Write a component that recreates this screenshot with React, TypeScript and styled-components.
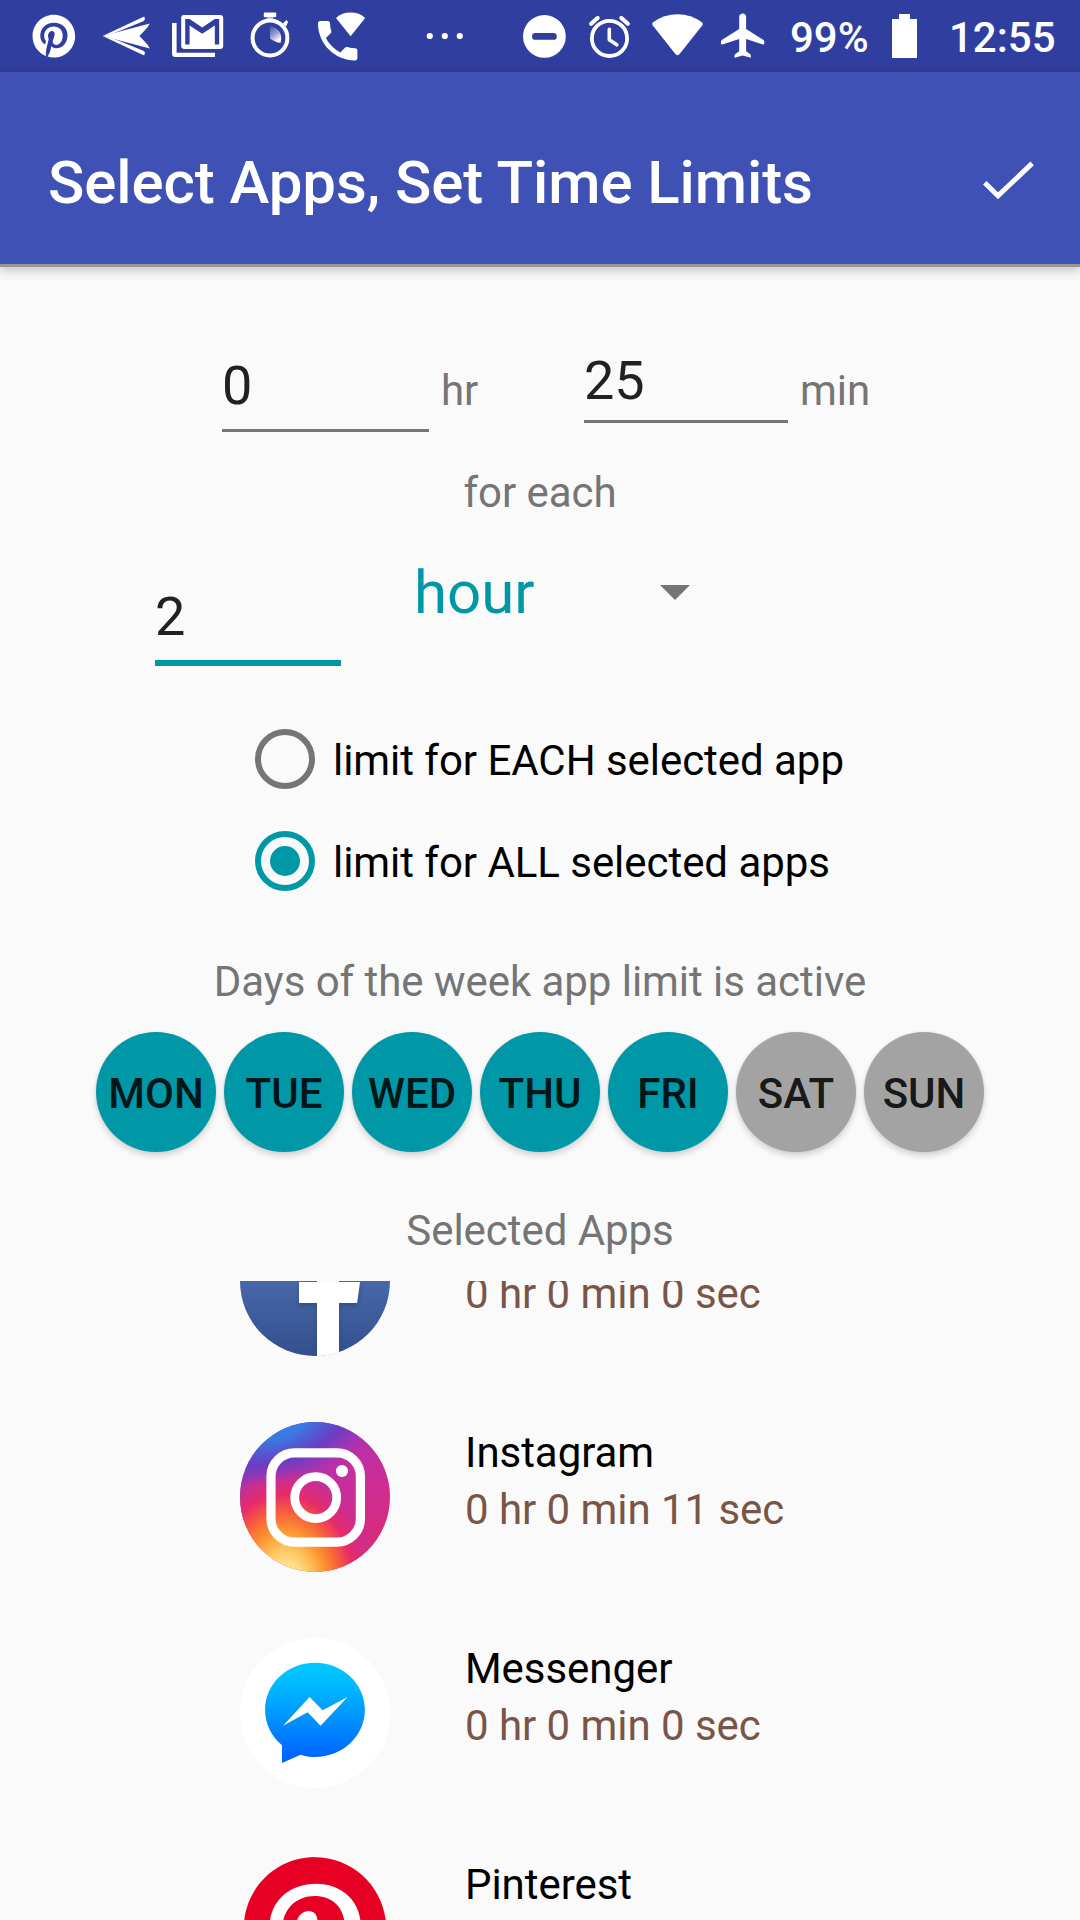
import React, { useState } from "react";
import styled, { createGlobalStyle, css } from "styled-components";

const color = {
  statusBar: "#303f9f",
  appBar: "#3f51b5",
  page: "#fafafa",
  accent: "#0097a7",
  hint: "#757575",
  input: "#212121",
  usage: "#795548",
};

const GlobalStyle = createGlobalStyle`
  * { box-sizing: border-box; }
  html, body { margin: 0; padding: 0; background: ${color.page}; }
  body { font-family: Roboto, "Noto Sans", sans-serif; overflow: hidden; }
`;

const Screen = styled.div`
  width: 1080px;
  height: 1920px;
  display: flex;
  flex-direction: column;
  overflow: hidden;
  background: ${color.page};
`;

/* ---------- status bar ---------- */

const StatusBar = styled.div`
  flex: none;
  display: flex;
  align-items: flex-start;
  height: 72px;
  background: ${color.statusBar};
  color: #fff;
`;

const StatusIcon = styled.svg<{ $gap: number }>`
  flex: none;
  display: block;
  height: 72px;
  margin-left: ${(p) => p.$gap}px;
  fill: #fff;
`;

const StatusText = styled.span<{ $gap: number; $width: number }>`
  flex: none;
  width: ${(p) => p.$width}px;
  margin-left: ${(p) => p.$gap}px;
  padding-top: 13px;
  font-size: 42px;
  font-weight: 500;
  line-height: 50px;
  white-space: nowrap;
`;

/* ---------- app bar ---------- */

const AppBar = styled.header`
  flex: none;
  position: relative;
  display: flex;
  align-items: flex-start;
  justify-content: space-between;
  height: 192px;
  padding: 76px 42px 0 48px;
  background: ${color.appBar};
  color: #fff;
  box-shadow: 0 3px 0 #969696, 0 4px 12px 1px rgba(0, 0, 0, 0.28);
`;

const Title = styled.h1`
  margin: 0;
  font-size: 60px;
  font-weight: 500;
  letter-spacing: -0.085px;
  line-height: 70px;
  white-space: nowrap;
`;

const DoneButton = styled.button`
  width: 60px;
  height: 60px;
  margin-top: 6px;
  padding: 0;
  border: 0;
  background: none;
  svg { display: block; }
`;

/* ---------- limit form ---------- */

const Form = styled.main`
  flex: 1;
  min-height: 0;
  display: flex;
  flex-direction: column;
  letter-spacing: -0.045px;
`;

const AllowanceRow = styled.div`
  display: flex;
  align-items: flex-start;
  height: 204px;
  padding: 84px 0 0 222px;
`;

const PeriodRow = styled.div`
  display: flex;
  align-items: flex-start;
  height: 190px;
  padding: 40px 0 0 155px;
`;

const NumberField = styled.div<{ $width: number; $height: number; $top?: number; $focused?: boolean }>`
  flex: none;
  width: ${(p) => p.$width}px;
  height: ${(p) => p.$height}px;
  margin-top: ${(p) => p.$top ?? 0}px;
  border-bottom: ${(p) => (p.$focused ? `6px solid ${color.accent}` : `3px solid ${color.hint}`)};
  color: ${color.input};
  font-size: 54px;
  line-height: 64px;
`;

const Unit = styled.span<{ $width: number }>`
  flex: none;
  width: ${(p) => p.$width}px;
  padding: 18px 0 0 12px;
  color: ${color.hint};
  font-size: 42px;
  line-height: 50px;
`;

const Caption = styled.p<{ $bottom: number }>`
  flex: none;
  margin: 0 0 ${(p) => p.$bottom}px;
  color: ${color.hint};
  font-size: 42px;
  line-height: 50px;
  text-align: center;
`;

const Spinner = styled.div`
  display: flex;
  align-items: flex-start;
  justify-content: space-between;
  width: 276px;
  margin-left: 73px;
  color: ${color.accent};
  font-size: 60px;
  line-height: 70px;
`;

const Caret = styled.span`
  width: 0;
  height: 0;
  margin-top: 27px;
  border: 15px solid transparent;
  border-top-color: ${color.hint};
  border-bottom: 0;
`;

const RadioGroup = styled.div`
  display: flex;
  flex-direction: column;
  margin-bottom: 45px;
  padding-left: 255px;
`;

const RadioRow = styled.label`
  display: flex;
  align-items: center;
  gap: 18px;
  height: 102px;
  color: #000;
  font-size: 42px;
  line-height: 50px;
  white-space: nowrap;
`;

const RadioLabel = styled.span`
  padding-top: 4px;
`;

const RadioRing = styled.span<{ $checked: boolean }>`
  display: flex;
  align-items: center;
  justify-content: center;
  width: 60px;
  height: 60px;
  border: 6px solid ${(p) => (p.$checked ? color.accent : color.hint)};
  border-radius: 50%;
  ${(p) =>
    p.$checked &&
    css`
      &::after {
        content: "";
        width: 30px;
        height: 30px;
        border-radius: 50%;
        background: ${color.accent};
      }
    `}
`;

const DayRow = styled.div`
  display: flex;
  justify-content: center;
  gap: 8px;
  margin-bottom: 54px;
`;

const DayButton = styled.button<{ $active: boolean }>`
  width: 120px;
  height: 120px;
  padding: 3px 0 0;
  border: 0;
  border-radius: 50%;
  background: ${(p) => (p.$active ? color.accent : "#a3a3a3")};
  color: rgba(0, 0, 0, 0.87);
  font: 500 42px/50px Roboto, sans-serif;
  box-shadow: 0 4px 6px rgba(0, 0, 0, 0.15), 0 0 3px rgba(0, 0, 0, 0.08);
`;

/* ---------- app list ---------- */

const AppList = styled.ul`
  flex: 1;
  min-height: 0;
  overflow: hidden;
  margin: 0;
  padding: 0 0 0 240px;
  list-style: none;
`;

const AppRow = styled.li`
  display: flex;
  align-items: flex-start;
  gap: 75px;
  height: 216px;
  &:first-child { margin-top: -75px; }
`;

const AppIcon = styled.svg`
  flex: none;
  display: block;
  width: 150px;
  height: 150px;
`;

const AppText = styled.div`
  display: flex;
  flex-direction: column;
  gap: 7px;
  padding-top: 6px;
  font-size: 42px;
  line-height: 50px;
  white-space: nowrap;
`;

const AppName = styled.span`
  min-height: 50px;
  color: #000;
`;

const AppUsage = styled.span`
  color: ${color.usage};
`;

const PINTEREST =
  "M12.017 0C5.396 0 .029 5.367.029 11.987c0 5.079 3.158 9.417 7.618 11.162-.105-.949-.199-2.403.041-3.439.219-.937 1.406-5.957 1.406-5.957s-.359-.72-.359-1.781c0-1.663.967-2.911 2.168-2.911 1.024 0 1.518.769 1.518 1.688 0 1.029-.653 2.567-.992 3.992-.285 1.193.6 2.165 1.775 2.165 2.128 0 3.768-2.245 3.768-5.487 0-2.861-2.063-4.869-5.008-4.869-3.41 0-5.409 2.562-5.409 5.199 0 1.033.394 2.143.889 2.741.099.12.112.225.085.345-.09.375-.293 1.199-.334 1.363-.053.225-.172.271-.401.165-1.495-.69-2.433-2.878-2.433-4.646 0-3.776 2.748-7.252 7.92-7.252 4.158 0 7.392 2.967 7.392 6.923 0 4.135-2.607 7.462-6.233 7.462-1.214 0-2.354-.629-2.758-1.379l-.749 2.848c-.269 1.045-1.004 2.352-1.498 3.146 1.123.345 2.306.535 3.55.535 6.607 0 11.985-5.365 11.985-11.987C23.97 5.39 18.592.026 11.985.026L12.017 0z";

/* Status glyphs are drawn in screen coordinates: each viewBox is a slice of the 72px bar. */
const Glyph = ({ x, w, gap, children }: { x: number; w: number; gap: number; children: React.ReactNode }) => (
  <StatusIcon $gap={gap} width={w} viewBox={`${x} 0 ${w} 72`} aria-hidden>
    {children}
  </StatusIcon>
);

const StatusIcons = () => (
  <StatusBar>
    <Glyph x={30} w={50} gap={30}>
      <path d={PINTEREST} transform="translate(32.5 14.8) scale(1.78)" />
    </Glyph>
    <Glyph x={100} w={52} gap={20}>
      <path d="M102.6 36L144.2 16.4L145 19.6L142.8 21.6L113 33.6Z" />
      <path d="M102.6 36L149.8 23.6L147.4 27.4L139.4 36L147.4 44.6L149.8 48.6Z" />
      <path d="M102.6 36L113 38.6L142.8 50.4L145 52.2L144.2 55.6Z" />
    </Glyph>
    <Glyph x={170} w={56} gap={18}>
      <path d="M172 23H176.6V52.8H215V57H175.5Q172 57 172 53.5Z" />
      <path
        fillRule="evenodd"
        d="M184 15H220Q223.2 15 223.2 18V46Q223.2 49 220 49H184.5Q181.2 49 181.2 46V18Q181.2 15 184 15ZM185.2 19V44.4H189.6V25.6L202.2 33.8L214.8 25.6V44.4H219.2V19H214.8L202.2 27.6L189.6 19Z"
      />
    </Glyph>
    <Glyph x={248} w={44} gap={22}>
      <defs>
        <linearGradient id="sweep" x1="0" y1="0" x2="0.5" y2="1">
          <stop offset="0" stopColor="#fff" stopOpacity="0.12" />
          <stop offset="0.55" stopColor="#fff" stopOpacity="0.5" />
          <stop offset="1" stopColor="#fff" />
        </linearGradient>
      </defs>
      <circle cx="270" cy="38" r="17.4" fill="none" stroke="#fff" strokeWidth="4" />
      <rect x="263.8" y="12.6" width="12.4" height="4.6" rx="1" />
      <path d="M267 17H273V20H267Z" opacity=".5" />
      <path d="M283.4 23.4L286.2 20.6L287.6 21.8L285.8 26Z" stroke="#fff" strokeWidth="1" />
      <path d="M270 26.4C276 26.6 281.2 31.6 281.2 37.6Q281.2 40 280.6 42.8Q275 42.4 270 38.4Z" fill="url(#sweep)" />
    </Glyph>
    <Glyph x={315} w={54} gap={23}>
      <path
        transform="translate(311.4 14.4) scale(2.19)"
        d="M20 15.5c-1.25 0-2.45-.2-3.57-.57-.35-.11-.74-.03-1.02.24l-2.2 2.2c-2.83-1.44-5.15-3.75-6.59-6.58l2.2-2.21c.28-.27.36-.66.25-1.01C8.7 6.45 8.5 5.25 8.5 4c0-.55-.45-1-1-1H4c-.55 0-1 .45-1 1 0 9.39 7.61 17 17 17 .55 0 1-.45 1-1v-3.5c0-.55-.45-1-1-1z"
      />
      <path d="M350.6 36.2L336 18Q342 12.6 350.6 12.6Q359.2 12.6 365.2 18Z" />
    </Glyph>
    <Glyph x={424} w={42} gap={55}>
      <circle cx="429.8" cy="36" r="3.1" />
      <circle cx="444.8" cy="36" r="3.1" />
      <circle cx="459.8" cy="36" r="3.1" />
    </Glyph>
    <Glyph x={520} w={50} gap={54}>
      <path
        fillRule="evenodd"
        d="M544.4 15A21.4 21.4 0 0 1 544.4 57.8A21.4 21.4 0 0 1 544.4 15ZM535.4 33A3.4 3.4 0 0 0 535.4 39.8H553.4A3.4 3.4 0 0 0 553.4 33Z"
      />
    </Glyph>
    <Glyph x={586} w={48} gap={16}>
      <g fill="none" stroke="#fff" strokeWidth="3.6" strokeLinecap="round" strokeLinejoin="round">
        <circle cx="609.5" cy="38.4" r="17.6" strokeWidth="3.8" />
        <path d="M609.3 29.4V39.8L616.8 44.8" />
        <path d="M591.2 23.8L597.6 18M627.8 23.8L621.4 18" strokeWidth="4.2" />
      </g>
    </Glyph>
    <Glyph x={650} w={56} gap={16}>
      <path d="M679.2 54.4Q677.5 56 675.8 54.4L652.6 25.2Q651.6 23.4 653.2 22.2Q664 14.2 677.5 14.2Q691 14.2 701.8 22.2Q703.4 23.4 702.4 25.2Z" />
    </Glyph>
    <Glyph x={718} w={50} gap={12}>
      <path
        transform="translate(716.2 9) scale(2.3 2.22)"
        d="M20.9 15.7c-.1.3-.3.4-.6.3L13 13.5V19l1.8 1.4c.3.3.3.8.2 1.6l-3.5-1L8 22c-.1-.8-.1-1.3.2-1.6L10 19v-5.5L2.7 16c-.3.1-.5 0-.6-.3-.1-1 0-1.6.5-1.9L10 9V3.5c0-.83.67-1.5 1.5-1.5S13 2.67 13 3.5V9l7.4 4.8c.5.3.6.9.5 1.9z"
      />
    </Glyph>
    <StatusText $gap={22} $width={80}>99%</StatusText>
    <Glyph x={892} w={25} gap={22}>
      <path d="M892 19H899V14H910V19H917V58H892Z" />
    </Glyph>
    <StatusText $gap={32} $width={108}>12:55</StatusText>
  </StatusBar>
);

/* ---------- launcher icons, each on a 150 x 150 canvas ---------- */

const FacebookIcon = () => (
  <AppIcon viewBox="0 0 150 150" aria-hidden>
    <defs>
      <linearGradient id="fb" x1="0" y1="0" x2="0" y2="1">
        <stop offset="0" stopColor="#507bbf" />
        <stop offset="0.5" stopColor="#4867aa" />
        <stop offset="1" stopColor="#344f8d" />
      </linearGradient>
      <clipPath id="fbClip">
        <circle cx="75" cy="75" r="75" />
      </clipPath>
      <filter id="fbShadow" x="-20%" y="-20%" width="140%" height="140%">
        <feDropShadow dx="0" dy="3" stdDeviation="2" floodColor="#1d3468" floodOpacity="0.5" />
      </filter>
    </defs>
    <g clipPath="url(#fbClip)">
      <rect width="150" height="150" fill="url(#fb)" />
      <path
        fill="#fff"
        filter="url(#fbShadow)"
        d="M77 160V97H59V76H77V62Q77 36 102 36H118V56H108Q99 56 99 65V76H120L117 97H99V160Z"
      />
      <path fill="#fff" d="M77 97H99V150H77Z" />
    </g>
  </AppIcon>
);

const InstagramIcon = () => (
  <AppIcon viewBox="0 0 150 150" aria-hidden>
    <defs>
      <linearGradient id="igBase" x1="0.25" y1="0.05" x2="0.75" y2="0.9">
        <stop offset="0" stopColor="#7a3abf" />
        <stop offset="0.25" stopColor="#9a36b8" />
        <stop offset="0.45" stopColor="#c02fa2" />
        <stop offset="0.7" stopColor="#d02c92" />
        <stop offset="1" stopColor="#d82c7a" />
      </linearGradient>
      <radialGradient
        id="igWarm"
        gradientUnits="userSpaceOnUse"
        cx="0"
        cy="0"
        r="1"
        gradientTransform="translate(47 158) rotate(-8) scale(94 120)"
      >
        <stop offset="0" stopColor="#ffe897" />
        <stop offset="0.14" stopColor="#fee08a" />
        <stop offset="0.27" stopColor="#fdc35a" />
        <stop offset="0.42" stopColor="#fd9230" />
        <stop offset="0.56" stopColor="#f9613a" />
        <stop offset="0.71" stopColor="#e62c68" />
        <stop offset="0.86" stopColor="#d22d87" stopOpacity="0.75" />
        <stop offset="1" stopColor="#b030a5" stopOpacity="0" />
      </radialGradient>
      <radialGradient
        id="igCool"
        gradientUnits="userSpaceOnUse"
        cx="0"
        cy="0"
        r="1"
        gradientTransform="translate(36 -6) rotate(-17) scale(104 66)"
      >
        <stop offset="0" stopColor="#2a86ea" />
        <stop offset="0.35" stopColor="#3b78e0" />
        <stop offset="0.7" stopColor="#6040c6" stopOpacity="0.8" />
        <stop offset="1" stopColor="#7a3abf" stopOpacity="0" />
      </radialGradient>
      <clipPath id="igClip">
        <circle cx="75" cy="75" r="75" />
      </clipPath>
    </defs>
    <g clipPath="url(#igClip)">
      <rect width="150" height="150" fill="url(#igBase)" />
      <rect width="150" height="150" fill="url(#igWarm)" />
      <rect width="150" height="150" fill="url(#igCool)" />
    </g>
    <rect x="31" y="30.8" width="89.4" height="89.4" rx="23.5" fill="none" stroke="#fff" strokeWidth="9.2" />
    <circle cx="75.7" cy="75.6" r="21" fill="none" stroke="#fff" strokeWidth="8.8" />
    <circle cx="102" cy="49" r="6.1" fill="#fff" />
  </AppIcon>
);

const MessengerIcon = () => (
  <AppIcon viewBox="0 0 150 150" aria-hidden>
    <defs>
      <linearGradient id="bubble" x1="0" y1="0" x2="0" y2="1">
        <stop offset="0" stopColor="#00c8ff" />
        <stop offset="0.2" stopColor="#00bcff" />
        <stop offset="1" stopColor="#005fff" />
      </linearGradient>
    </defs>
    <circle cx="75" cy="75" r="75" fill="#fff" />
    <path
      fill="url(#bubble)"
      d="M75 24.7C47.4 24.7 25.1 45.6 25.1 71.8C25.1 86 31.5 98.6 42 107.3V125L60.6 116.7C65 118.2 70 119 75 119C102.6 119 124.9 98 124.9 71.8C124.9 45.6 102.6 24.7 75 24.7Z"
    />
    <path fill="#fff" d="M43 87.7L69.6 59L82.6 72.2L107.6 59L80.6 87.7L67.6 74.2Z" />
  </AppIcon>
);

const PinterestIcon = () => (
  <AppIcon viewBox="0 0 150 150" aria-hidden>
    <circle cx="75" cy="74.5" r="66" fill="#fff" />
    <path fill="#e60023" transform="translate(3.6 3.1) scale(5.95)" d={PINTEREST} />
  </AppIcon>
);

/* The first row is scrolled past its name; the last one ends above its usage line. */
const apps = [
  { id: "fb", name: "", usage: "0 hr 0 min 0 sec", Icon: FacebookIcon },
  { id: "ig", name: "Instagram", usage: "0 hr 0 min 11 sec", Icon: InstagramIcon },
  { id: "ms", name: "Messenger", usage: "0 hr 0 min 0 sec", Icon: MessengerIcon },
  { id: "pt", name: "Pinterest", usage: "", Icon: PinterestIcon },
];

const scopes = ["limit for EACH selected app", "limit for ALL selected apps"];
const week = ["MON", "TUE", "WED", "THU", "FRI", "SAT", "SUN"];

export default function App() {
  const [scope, setScope] = useState(1);
  const [days, setDays] = useState(["MON", "TUE", "WED", "THU", "FRI"]);

  const toggleDay = (day: string) =>
    setDays((d) => (d.includes(day) ? d.filter((x) => x !== day) : [...d, day]));

  return (
    <Screen>
      <GlobalStyle />
      <StatusIcons />
      <AppBar>
        <Title>Select Apps, Set Time Limits</Title>
        <DoneButton aria-label="Done">
          <svg width="60" height="60" viewBox="0 0 60 60" fill="none">
            <path d="M6.8 28.8L20 41.8L54.2 9.4" stroke="#fff" strokeWidth="5" />
          </svg>
        </DoneButton>
      </AppBar>
      <Form>
        <AllowanceRow>
          <NumberField $width={207} $height={78} $top={6}>0</NumberField>
          <Unit $width={155}>hr</Unit>
          <NumberField $width={204} $height={74} $top={1}>25</NumberField>
          <Unit $width={100}>min</Unit>
        </AllowanceRow>
        <Caption $bottom={0}>for each</Caption>
        <PeriodRow>
          <NumberField $width={186} $height={81} $top={27} $focused>2</NumberField>
          <Spinner>
            hour
            <Caret />
          </Spinner>
        </PeriodRow>
        <RadioGroup>
          {scopes.map((label, i) => (
            <RadioRow key={label} onClick={() => setScope(i)}>
              <RadioRing $checked={scope === i} />
              <RadioLabel>{label}</RadioLabel>
            </RadioRow>
          ))}
        </RadioGroup>
        <Caption $bottom={25}>Days of the week app limit is active</Caption>
        <DayRow>
          {week.map((day) => (
            <DayButton key={day} $active={days.includes(day)} onClick={() => toggleDay(day)}>
              {day}
            </DayButton>
          ))}
        </DayRow>
        <Caption $bottom={25}>Selected Apps</Caption>
        <AppList>
          {apps.map(({ id, name, usage, Icon }) => (
            <AppRow key={id}>
              <Icon />
              <AppText>
                <AppName>{name}</AppName>
                {usage && <AppUsage>{usage}</AppUsage>}
              </AppText>
            </AppRow>
          ))}
        </AppList>
      </Form>
    </Screen>
  );
}
